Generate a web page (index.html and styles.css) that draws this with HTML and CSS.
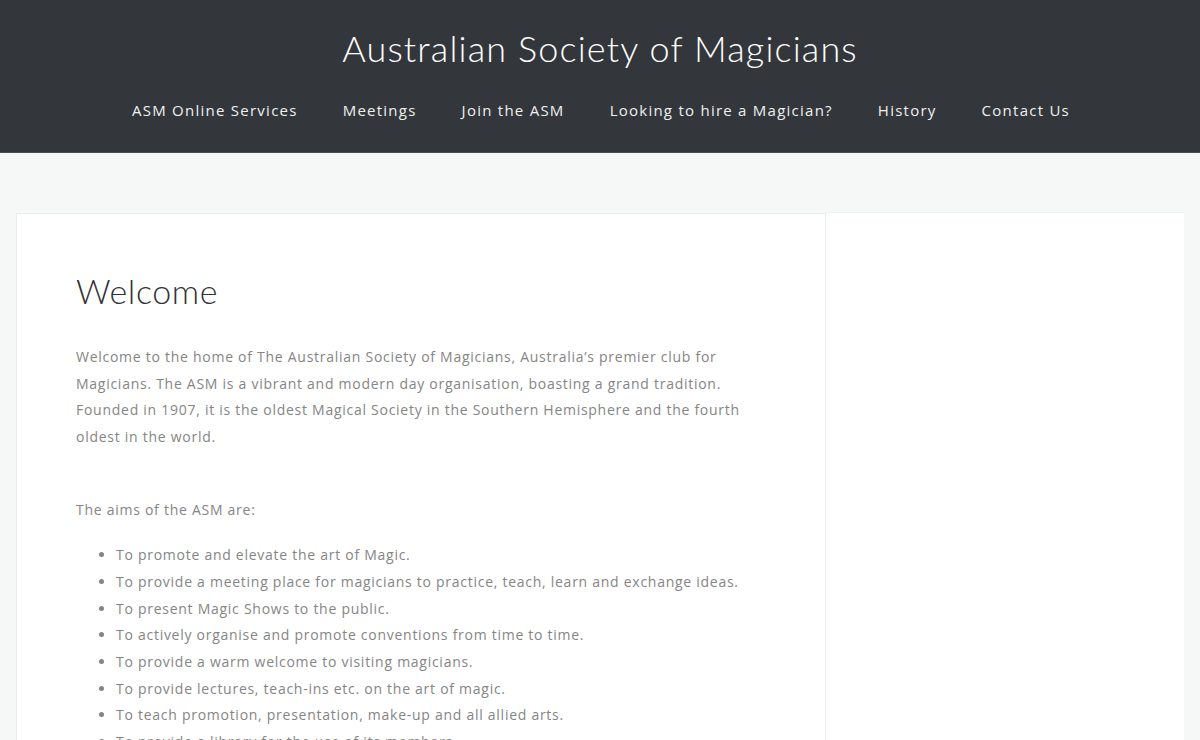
FILE: index.html
```html
<!DOCTYPE html>
<html lang="en">
<head>
<meta charset="utf-8">
<title>Australian Society of Magicians</title>
<link rel="stylesheet" href="styles.css">
</head>
<body>
<header class="site-header">
  <div class="site-title">Australian Society of Magicians</div>
  <nav class="main-nav">
    <a href="#">ASM Online Services</a>
    <a href="#">Meetings</a>
    <a href="#">Join the ASM</a>
    <a href="#">Looking to hire a Magician?</a>
    <a href="#">History</a>
    <a href="#">Contact Us</a>
  </nav>
</header>
<div class="site-main">
  <main class="content">
    <h1 class="entry-title">Welcome</h1>
    <p class="intro">Welcome to the home of The Australian Society of Magicians, Australia’s premier club for Magicians. The ASM is a vibrant and modern day organisation, boasting a grand tradition. Founded in 1907, it is the oldest Magical Society in the Southern Hemisphere and the fourth oldest in the world.<br><br></p>
    <p>The aims of the ASM are:</p>
    <ul class="aims">
      <li>To promote and elevate the art of Magic.</li>
      <li>To provide a meeting place for magicians to practice, teach, learn and exchange ideas.</li>
      <li>To present Magic Shows to the public.</li>
      <li>To actively organise and promote conventions from time to time.</li>
      <li>To provide a warm welcome to visiting magicians.</li>
      <li>To provide lectures, teach-ins etc. on the art of magic.</li>
      <li>To teach promotion, presentation, make-up and all allied arts.</li>
      <li>To provide a library for the use of its members.</li>
    </ul>
  </main>
  <aside class="sidebar"></aside>
</div>
</body>
</html>
```

FILE: styles.css
```css
* { box-sizing: border-box; }
html, body { margin: 0; padding: 0; }
body {
  background: #f5f8f7;
  font-family: "Open Sans", "Liberation Sans", sans-serif;
  color: #858585;
  overflow: hidden;
  height: 740px;
}
.site-header {
  background: #33373b;
  height: 153px;
  border-bottom: 1px solid #4a4e52;
  text-align: center;
  padding-top: 25px;
}
.site-title {
  font-family: "Lato", "Open Sans", sans-serif;
  font-weight: 300;
  font-size: 36px;
  letter-spacing: 1.15px;
  color: #fff;
  line-height: 46px;
}
.main-nav {
  display: flex;
  justify-content: center;
  gap: 45px;
  margin-top: 27px;
  padding-left: 2px;
}
.main-nav a {
  color: #eef0f0;
  text-decoration: none;
  font-size: 15px;
  letter-spacing: 1.25px;
  line-height: 24px;
}
.site-main {
  display: flex;
  align-items: flex-start;
  padding: 59px 16px 0;
}
.content {
  width: 810px;
  background: #fff;
  border: 1px solid #eceeed;
  border-right: 1px solid #e9ebea;
  margin-top: 1px;
  padding: 54px 60px 0 59px;
  min-height: 600px;
}
.sidebar {
  flex: 1;
  background: #fff;
  min-height: 600px;
  border-top: 1px solid #f0f2f1;
}
.entry-title {
  font-family: "Lato", "Open Sans", sans-serif;
  font-weight: 300;
  font-size: 34px;
  letter-spacing: 0.6px;
  color: #333;
  margin: 0 0 30px;
  line-height: 46px;
}
.content p {
  margin: 0 0 19px;
  font-size: 14px;
  letter-spacing: 0.73px;
  line-height: 26.7px;
}
.aims {
  margin: 0;
  padding-left: 40px;
  font-size: 14px;
  letter-spacing: 0.73px;
  line-height: 26.7px;
}
```
